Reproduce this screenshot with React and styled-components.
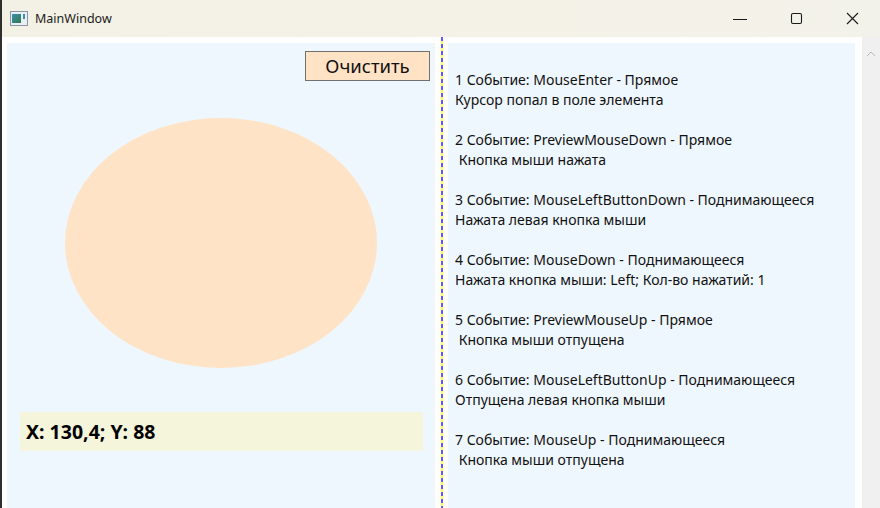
import React from 'react';
import styled, { createGlobalStyle } from 'styled-components';

const GlobalStyle = createGlobalStyle`
  html, body {
    margin: 0;
    padding: 0;
    background: #ffffff;
  }
  body {
    font-family: "Noto Sans", "Open Sans", "DejaVu Sans", sans-serif;
  }
`;

const Window = styled.div`
  width: 880px;
  height: 508px;
  display: flex;
  flex-direction: column;
  overflow: hidden;
  border-left: 2px solid #2f2f2f;
  box-sizing: border-box;
  background: #ffffff;
`;

const TitleBar = styled.div`
  height: 37px;
  flex: none;
  display: flex;
  align-items: center;
  background: linear-gradient(90deg, #f3f1e5 0%, #f4f2e7 60%, #f3f2ea 100%);
  padding-left: 8px;

  .title {
    font-size: 12.5px;
    color: #1a1a1a;
    margin-left: 7px;
    flex: 1;
    padding-bottom: 1px;
  }
`;

const Controls = styled.div`
  display: flex;
  height: 100%;
`;

const ControlButton = styled.div`
  width: 56px;
  height: 100%;
  display: flex;
  align-items: center;
  justify-content: center;
`;

const Body = styled.div`
  flex: 1;
  display: flex;
  padding-top: 6px;
  padding-left: 5px;
  min-height: 0;
`;

const LeftPanel = styled.div`
  width: 428px;
  flex: none;
  background: #eff7fe;
  display: flex;
  flex-direction: column;
  align-items: stretch;
  padding: 8px 0 0 13px;
  box-sizing: border-box;
`;

const ButtonRow = styled.div`
  display: flex;
  justify-content: flex-end;
  padding-right: 5px;
`;

const ClearButton = styled.button`
  width: 125px;
  height: 30px;
  background: #ffe3c4;
  border: 1px solid #707070;
  font-family: "Noto Sans", "Open Sans", sans-serif;
  font-size: 18.5px;
  color: #111;
  padding: 0 0 2px;
  margin: 0;
`;

const EllipseArea = styled.div`
  display: flex;
  height: 331px;
  padding-left: 45px;
  padding-top: 37px;
  box-sizing: border-box;
`;

const Ellipse = styled.div`
  width: 312px;
  height: 250px;
  border-radius: 50%;
  background: #fee3c6;
`;

const Coords = styled.div`
  width: 403px;
  height: 39px;
  background: #f5f5dc;
  display: flex;
  align-items: center;
  padding-left: 6px;
  box-sizing: border-box;
  font-size: 19.5px;
  font-weight: 700;
  color: #000;
`;

const Divider = styled.div`
  width: 2px;
  flex: none;
  margin: -6px 5px 0 6px;
  background: repeating-linear-gradient(
    180deg,
    #5c5cf2 0px,
    #5c5cf2 4px,
    #ffff4a 4px,
    #ffff4a 7px
  );
`;

const RightPanel = styled.div`
  width: 407px;
  flex: none;
  background: #eff7fe;
  padding: 27px 0 0 7px;
  box-sizing: border-box;
  display: flex;
  flex-direction: column;
  gap: 20px;
`;

const EventBlock = styled.div`
  font-size: 14px;
  line-height: 20px;
  color: #111;
  white-space: pre;
`;

const Scrollbar = styled.div`
  width: 18px;
  flex: none;
  margin-left: 7px;
  margin-top: -6px;
  background: #f0f0f0;
  display: flex;
  justify-content: center;
  padding-top: 14px;
  box-sizing: border-box;
`;

const events = [
  ['1 Событие: MouseEnter - Прямое', 'Курсор попал в поле элемента'],
  ['2 Событие: PreviewMouseDown - Прямое', ' Кнопка мыши нажата'],
  ['3 Событие: MouseLeftButtonDown - Поднимающееся', 'Нажата левая кнопка мыши'],
  ['4 Событие: MouseDown - Поднимающееся', 'Нажата кнопка мыши: Left; Кол-во нажатий: 1'],
  ['5 Событие: PreviewMouseUp - Прямое', ' Кнопка мыши отпущена'],
  ['6 Событие: MouseLeftButtonUp - Поднимающееся', 'Отпущена левая кнопка мыши'],
  ['7 Событие: MouseUp - Поднимающееся', ' Кнопка мыши отпущена'],
];

const AppIcon = () => (
  <svg width="18" height="15" viewBox="0 0 18 15">
    <rect x="0.5" y="0.5" width="17" height="14" fill="#e8eef2" stroke="#8a98a4" />
    <defs>
      <linearGradient id="ig" x1="0" y1="0" x2="1" y2="1">
        <stop offset="0" stopColor="#3d8fb0" />
        <stop offset="1" stopColor="#2f7a4a" />
      </linearGradient>
    </defs>
    <rect x="2" y="3" width="9" height="9" fill="url(#ig)" />
    <rect x="13" y="3" width="2" height="5" fill="#3d8fb0" />
  </svg>
);

const App = () => (
  <>
    <GlobalStyle />
    <Window>
      <TitleBar>
        <AppIcon />
        <span className="title">MainWindow</span>
        <Controls>
          <ControlButton>
            <svg width="14" height="12" viewBox="0 0 14 12">
              <path d="M0 6.5 H14" stroke="#1a1a1a" strokeWidth="1" />
            </svg>
          </ControlButton>
          <ControlButton>
            <svg width="13" height="13" viewBox="0 0 13 13">
              <rect x="1.5" y="1.5" width="10" height="10" rx="1.5" fill="none" stroke="#1a1a1a" strokeWidth="1.1" />
            </svg>
          </ControlButton>
          <ControlButton>
            <svg width="13" height="13" viewBox="0 0 13 13">
              <path d="M1 1 L12 12 M12 1 L1 12" stroke="#1a1a1a" strokeWidth="1.1" />
            </svg>
          </ControlButton>
        </Controls>
      </TitleBar>
      <Body>
        <LeftPanel>
          <ButtonRow>
            <ClearButton>Очистить</ClearButton>
          </ButtonRow>
          <EllipseArea>
            <Ellipse />
          </EllipseArea>
          <Coords>X: 130,4; Y: 88</Coords>
        </LeftPanel>
        <Divider />
        <RightPanel>
          {events.map(([head, text]) => (
            <EventBlock key={head}>
              {head}
              {'\n'}
              {text}
            </EventBlock>
          ))}
        </RightPanel>
        <Scrollbar>
          <svg width="10" height="6" viewBox="0 0 10 6">
            <path d="M1 5 L5 1 L9 5" fill="none" stroke="#b8b8b8" strokeWidth="1" />
          </svg>
        </Scrollbar>
      </Body>
    </Window>
  </>
);

export default App;
